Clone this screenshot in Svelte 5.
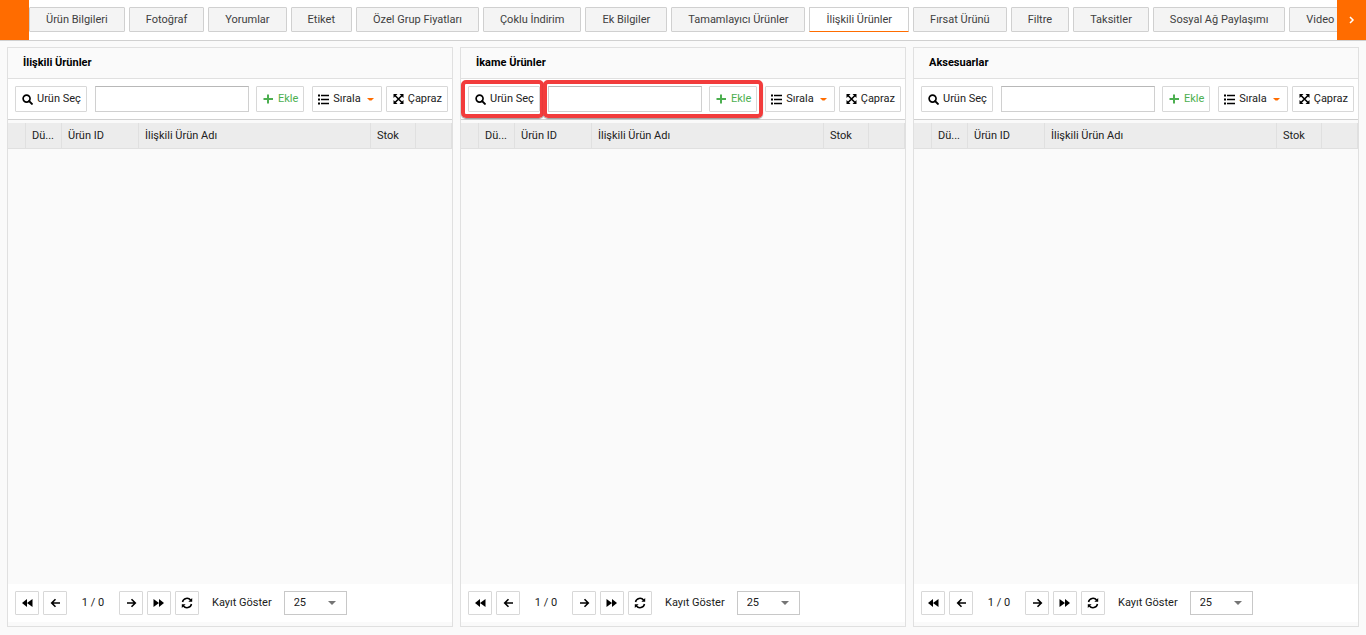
<script lang="ts">
    type Panel = {
        id: string;
        title: string;
        marked: boolean;
    };

    const tabs: string[] = [
        "Ürün Bilgileri",
        "Fotoğraf",
        "Yorumlar",
        "Etiket",
        "Özel Grup Fiyatları",
        "Çoklu İndirim",
        "Ek Bilgiler",
        "Tamamlayıcı Ürünler",
        "İlişkili Ürünler",
        "Fırsat Ürünü",
        "Filtre",
        "Taksitler",
        "Sosyal Ağ Paylaşımı",
        "Video",
    ];

    const panels: Panel[] = [
        { id: "related", title: "İlişkili Ürünler", marked: false },
        { id: "substitute", title: "İkame Ürünler", marked: true },
        { id: "accessory", title: "Aksesuarlar", marked: false },
    ];

    let activeTab = $state("İlişkili Ürünler");
    let search = $state<Record<string, string>>({ related: "", substitute: "", accessory: "" });
</script>

<div class="page">
    <nav class="tabbar">
        <button class="scroll" aria-label="Geri"></button>
        <div class="tabs">
            {#each tabs as tab}
                <button class="tab" class:active={tab === activeTab} onclick={() => (activeTab = tab)}>{tab}</button>
            {/each}
        </div>
        <button class="scroll" aria-label="İleri">
            <svg width="7" height="8" viewBox="0 0 7 8"><path d="M2 1l3 3-3 3" fill="none" stroke="#fff" stroke-width="1.5" /></svg>
        </button>
    </nav>

    <main>
        {#each panels as panel (panel.id)}
            <section class="panel">
                <h2>{panel.title}</h2>

                <div class="toolbar">
                    <div class="group pick" class:marked={panel.marked}>
                        <button class="btn">
                            <svg width="11" height="11" viewBox="0 0 12 12">
                                <circle cx="5" cy="5" r="3.8" fill="none" stroke="#000" stroke-width="1.8" />
                                <path d="M7.8 7.8l3 3" stroke="#000" stroke-width="2.2" stroke-linecap="round" />
                            </svg>
                            Urün Seç
                        </button>
                    </div>
                    <div class="group add" class:marked={panel.marked}>
                        <input type="text" aria-label="Ürün ara" bind:value={search[panel.id]} />
                        <button class="btn green">
                            <svg width="11" height="12" viewBox="0 0 11 12"><path d="M5 1.5v9M.5 6h9.500" stroke="#4caf50" stroke-width="2" /></svg>
                            Ekle
                        </button>
                    </div>
                    <div class="group">
                        <button class="btn sort">
                            <svg width="11" height="12" viewBox="0 0 11 12">
                                <path d="M0 2.500h2M0 6.500h2M0 10.500h2" stroke="#000" stroke-width="2" />
                                <path d="M3 2.500h8M3 6.500h8M3 10.500h8" stroke="#000" stroke-width="1.300" />
                            </svg>
                            Sırala
                            <svg class="caret" width="7" height="4" viewBox="0 0 7 4"><path d="M0 1h7L4.500 3.500h-2z" fill="#ff6c00" /></svg>
                        </button>
                        <button class="btn">
                            <svg width="11" height="12" viewBox="0 0 11 12">
                                <path d="M2 2.5l7 7M9 2.5l-7 7" stroke="#000" stroke-width="1.6" />
                                <path d="M.5 1h4l-4 4zM10.500 1h-4l4 4zM.5 11h4l-4-4zM10.500 11h-4l4-4z" />
                            </svg>
                            Çapraz
                        </button>
                    </div>
                </div>

                <div class="grid">
                    <table>
                        <colgroup>
                            <col class="c-check" />
                            <col class="c-edit" />
                            <col class="c-id" />
                            <col />
                            <col class="c-stock" />
                            <col class="c-end" />
                        </colgroup>
                        <thead>
                            <tr>
                                <th></th>
                                <th>Dü...</th>
                                <th>Ürün ID</th>
                                <th>İlişkili Ürün Adı</th>
                                <th>Stok</th>
                                <th></th>
                            </tr>
                        </thead>
                        <tbody></tbody>
                    </table>
                </div>

                <div class="pager">
                    <button class="btn square" aria-label="İlk sayfa">
                        <svg width="12" height="10" viewBox="0 0 12 10"><path d="M6 1v8L1 5zM11.500 1v8L6 5z" /></svg>
                    </button>
                    <button class="btn square" aria-label="Önceki sayfa">
                        <svg width="11" height="10" viewBox="0 0 11 10"><path d="M10 5H1.800M5.500 1.200L1.700 5l3.800 3.800" fill="none" stroke="#000" stroke-width="1.600" /></svg>
                    </button>
                    <span class="count">1 / 0</span>
                    <button class="btn square" aria-label="Sonraki sayfa">
                        <svg width="11" height="10" viewBox="0 0 11 10"><path d="M1 5h8.200M5.500 1.200L9.300 5 5.500 8.800" fill="none" stroke="#000" stroke-width="1.600" /></svg>
                    </button>
                    <button class="btn square" aria-label="Son sayfa">
                        <svg width="12" height="10" viewBox="0 0 12 10"><path d="M.5 1v8L6 5zM6 1v8l5-4z" /></svg>
                    </button>
                    <button class="btn square" aria-label="Yenile">
                        <svg width="12" height="12" viewBox="0 0 12 12">
                            <path d="M1.500 5a4.600 4.600 0 0 1 8.200-1.800M10.500 7a4.600 4.600 0 0 1-8.200 1.800" fill="none" stroke="#000" stroke-width="1.500" />
                            <path d="M11.200 1v3.800H7.400zM.8 11V7.200h3.800z" />
                        </svg>
                    </button>
                    <label for="size-{panel.id}">Kayıt Göster</label>
                    <div class="select">
                        <select id="size-{panel.id}">
                            <option>25</option>
                            <option>50</option>
                            <option>100</option>
                        </select>
                        <svg width="8" height="4" viewBox="0 0 8 4"><path d="M0 0h8L4 4z" fill="#757575" /></svg>
                    </div>
                </div>
            </section>
        {/each}
    </main>
</div>

<style>
    :global(body) {
        background: #fafafa;
    }

    .page {
        display: flex;
        flex-direction: column;
        height: 100vh;
        font-family: Roboto, sans-serif;
        font-size: 11px;
        line-height: 14px;
        color: #212121;
    }

    .page * {
        box-sizing: border-box;
    }

    button, input, select {
        font: inherit;
        color: inherit;
        margin: 0;
    }

    button {
        cursor: pointer;
    }

    .tabbar {
        display: flex;
        height: 41px;
        flex-shrink: 0;
        background: #fff;
        border-bottom: 1px solid #d0d0d0;
    }

    .scroll {
        display: flex;
        align-items: center;
        justify-content: center;
        width: 29px;
        flex-shrink: 0;
        padding: 0;
        border: none;
        background: #ff6c00;
    }

    .tabs {
        display: flex;
        flex: 1;
        min-width: 0;
        gap: 4px;
        padding-top: 7px;
        overflow: hidden;
    }

    .tab {
        flex-shrink: 0;
        height: 25px;
        padding: 0 16px;
        border: 1px solid #d0d0d0;
        border-radius: 1px;
        background: #f4f4f4;
        color: #404040;
    }

    .tab.active {
        background: #fff;
        border-bottom-color: #ff6c00;
    }

    main {
        display: grid;
        grid-template-columns: repeat(3, minmax(0, 1fr));
        gap: 7px;
        flex: 1;
        min-height: 0;
        padding: 6px 7px 8px;
    }

    .panel {
        display: flex;
        flex-direction: column;
        padding-bottom: 4px;
        border: 1px solid #e0e0e0;
    }

    h2 {
        height: 31px;
        margin: 0;
        padding: 8px 15px;
        border-bottom: 1px solid #e0e0e0;
        font-size: 11px;
        font-weight: 700;
        color: #000;
    }

    .toolbar {
        display: flex;
        gap: 8px;
        padding: 7px 4px 7px 7px;
        background: #fff;
        border-bottom: 1px solid #d0d0d0;
    }

    .group {
        position: relative;
        display: flex;
        gap: 4px;
    }

    .add {
        flex: 1;
        min-width: 0;
        gap: 7px;
    }

    /* red frames around the two steps */
    .marked::after {
        content: "";
        position: absolute;
        inset: -6px -4px -6px -7px;
        border: 4px solid #f23c3c;
        border-radius: 5px;
        box-shadow: 0 1px 1px rgba(0, 0, 0, 0.4);
        pointer-events: none;
    }

    .add.marked::after {
        inset: -6px -6px -6px -5px;
    }

    .btn {
        display: flex;
        align-items: center;
        justify-content: center;
        gap: 4px;
        height: 26px;
        padding: 0 5px 0 6px;
        border: 1px solid #d8d8d8;
        border-radius: 1px;
        background: #fff;
        white-space: nowrap;
    }

    .sort {
        padding: 0 5px;
    }

    .green {
        color: #4caf50;
    }

    .caret {
        margin: 0 2px;
    }

    input {
        flex: 1;
        min-width: 0;
        height: 26px;
        padding: 0 6px;
        border: 1px solid #d0d0d0;
        border-top-color: #b8b8b8;
        background: #fff;
    }

    .grid {
        flex: 1;
        padding-top: 3px;
    }

    table {
        width: 100%;
        table-layout: fixed;
        border-collapse: separate;
        border-spacing: 0;
    }

    .c-check {
        width: 18px;
    }

    .c-edit {
        width: 36px;
    }

    .c-id {
        width: 77px;
    }

    .c-stock {
        width: 45px;
    }

    .c-end {
        width: 36px;
    }

    th {
        height: 26px;
        padding: 0 4px 0 6px;
        border-right: 1px solid #e0e0e0;
        border-bottom: 1px solid #e0e0e0;
        background: #ececec;
        font-weight: 400;
        text-align: left;
        white-space: nowrap;
    }

    .pager {
        display: flex;
        align-items: center;
        gap: 4px;
        height: 38px;
        padding-left: 7px;
        background: #fff;
    }

    .square {
        width: 24px;
        height: 24px;
        padding: 0;
    }

    .count {
        width: 44px;
        text-align: center;
    }

    label {
        margin: 0 8px 0 9px;
    }

    .select {
        position: relative;
    }

    select {
        width: 63px;
        height: 24px;
        padding: 0 9px;
        border: 1px solid #c8c8c8;
        border-radius: 0;
        background: #fff;
        appearance: none;
    }

    .select svg {
        position: absolute;
        top: 10px;
        right: 11px;
        pointer-events: none;
    }
</style>
